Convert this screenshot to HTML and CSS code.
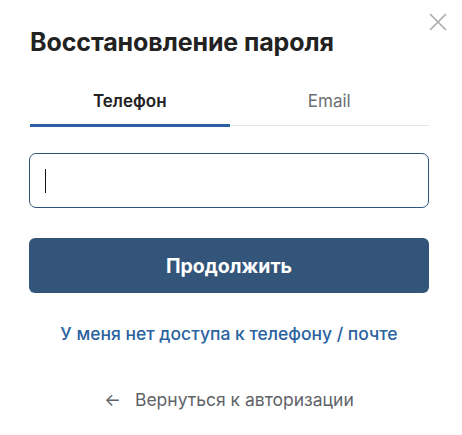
FILE: index.html
```html
<!DOCTYPE html>
<html lang="ru">
<head>
<meta charset="utf-8">
<link rel="stylesheet" href="styles.css">
</head>
<body>
<div class="modal">
  <button class="close" aria-label="Закрыть">
    <svg width="18" height="18" viewBox="0 0 18 18"><path d="M1.5 1.5 L16.5 16.5 M16.5 1.5 L1.5 16.5" stroke="#a9a9a9" stroke-width="1.6" fill="none" stroke-linecap="round"/></svg>
  </button>
  <h1 class="title">Восстановление пароля</h1>
  <div class="tabs">
    <div class="tab active">Телефон</div>
    <div class="tab">Email</div>
  </div>
  <div class="field"><span class="caret"></span></div>
  <button class="submit">Продолжить</button>
  <a class="link" href="#">У меня нет доступа к телефону / почте</a>
  <a class="back" href="#"><span class="arrow">←</span>Вернуться к авторизации</a>
</div>
</body>
</html>
```
FILE: styles.css
```css
html, body { margin: 0; padding: 0; background: #fff; }
body { font-family: Inter, "Liberation Sans", sans-serif; color: #222; }
.modal { position: relative; width: 400px; padding: 27px 33px 0 29px; display: flex; flex-direction: column; }
.close { position: absolute; top: 13px; right: 15px; width: 18px; height: 18px; padding: 0; border: 0; background: none; cursor: pointer; }
.close svg { display: block; }
.title { margin: 0 0 0 1px; font-size: 25px; font-weight: 700; line-height: 30px; color: #222; letter-spacing: -0.1px; }
.tabs { display: flex; margin-top: 33px; border-bottom: 1px solid #e2e4e6; width: 399px; margin-left: 1px; }
.tab { flex: 1; text-align: center; font-size: 17px; line-height: 22px; padding-bottom: 12px; color: #6b6e72; border-bottom: 3px solid transparent; margin-bottom: -2px; }
.tab.active { color: #222; font-weight: 600; border-bottom-color: #2b5fa3; }
.field { box-sizing: border-box; margin-top: 27px; height: 55px; border: 1px solid #30557c; border-radius: 7px; display: flex; align-items: center; padding-left: 15px; }
.caret { width: 1px; height: 24px; background: #111; }
.submit { margin-top: 30px; height: 55px; border: 0; border-radius: 6px; background: #33557a; color: #fff; font-family: inherit; font-size: 19.5px; font-weight: 700; }
.link { margin-top: 30px; text-align: center; color: #2b62a0; font-size: 17.5px; font-weight: 500; line-height: 22px; text-decoration: none; }
.back { margin-top: 44px; text-align: center; color: #5f6368; font-size: 17.5px; line-height: 22px; text-decoration: none; }
.arrow { margin-right: 14px; }
```
